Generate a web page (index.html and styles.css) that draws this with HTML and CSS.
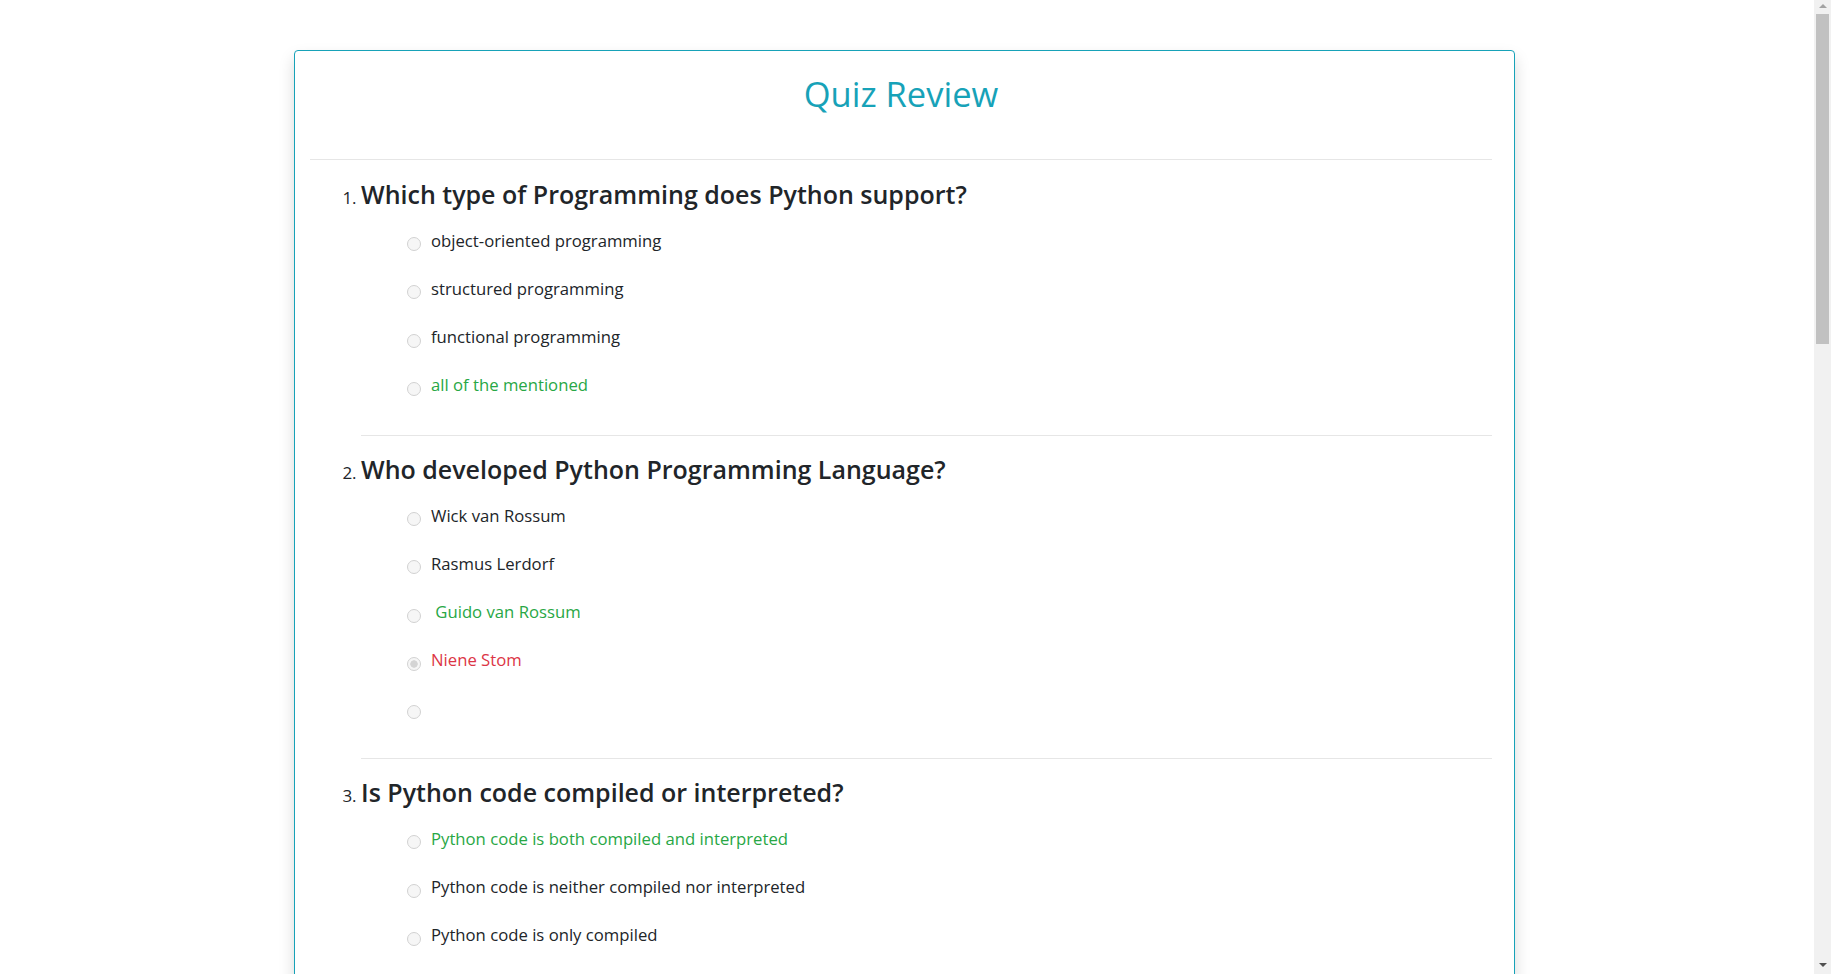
FILE: index.html
```html
<!DOCTYPE html>
<html lang="en">
<head>
<meta charset="utf-8">
<title>Quiz Review</title>
<link rel="stylesheet" href="styles.css">
</head>
<body>
<div class="card">
  <h2 class="title">Quiz Review</h2>
  <div class="card-body">
    <div class="rule"></div>
    <ol class="questions">
      <li class="question">
        <h3 class="q-text">Which type of Programming does Python support?</h3>
        <div class="options">
          <label class="option"><input type="radio" disabled><span class="opt-text">object-oriented programming</span></label>
          <label class="option"><input type="radio" disabled><span class="opt-text">structured programming</span></label>
          <label class="option"><input type="radio" disabled><span class="opt-text">functional programming</span></label>
          <label class="option"><input type="radio" disabled><span class="opt-text correct">all of the mentioned</span></label>
        </div>
        <div class="rule"></div>
      </li>
      <li class="question">
        <h3 class="q-text">Who developed Python Programming Language?</h3>
        <div class="options">
          <label class="option"><input type="radio" disabled><span class="opt-text">Wick van Rossum</span></label>
          <label class="option"><input type="radio" disabled><span class="opt-text">Rasmus Lerdorf</span></label>
          <label class="option"><input type="radio" disabled><span class="opt-text correct">&nbsp;Guido van Rossum</span></label>
          <label class="option"><input type="radio" disabled checked><span class="opt-text wrong">Niene Stom</span></label>
          <label class="option"><input type="radio" disabled><span class="opt-text"></span></label>
        </div>
        <div class="rule"></div>
      </li>
      <li class="question">
        <h3 class="q-text">Is Python code compiled or interpreted?</h3>
        <div class="options">
          <label class="option"><input type="radio" disabled><span class="opt-text correct">Python code is both compiled and interpreted</span></label>
          <label class="option"><input type="radio" disabled><span class="opt-text">Python code is neither compiled nor interpreted</span></label>
          <label class="option"><input type="radio" disabled><span class="opt-text">Python code is only compiled</span></label>
          <label class="option"><input type="radio" disabled><span class="opt-text">Python code is only interpreted</span></label>
        </div>
        <div class="rule"></div>
      </li>
      <li class="question">
        <h3 class="q-text">Is Python case sensitive when dealing with identifiers?</h3>
        <div class="options">
          <label class="option"><input type="radio" disabled><span class="opt-text">no</span></label>
          <label class="option"><input type="radio" disabled><span class="opt-text correct">yes</span></label>
          <label class="option"><input type="radio" disabled><span class="opt-text">machine dependent</span></label>
          <label class="option"><input type="radio" disabled><span class="opt-text">none of the mentioned</span></label>
        </div>
        <div class="rule"></div>
      </li>
      <li class="question">
        <h3 class="q-text">Which of the following is the correct extension of the Python file?</h3>
        <div class="options">
          <label class="option"><input type="radio" disabled><span class="opt-text">.python</span></label>
          <label class="option"><input type="radio" disabled><span class="opt-text">.pl</span></label>
          <label class="option"><input type="radio" disabled><span class="opt-text correct">.py</span></label>
          <label class="option"><input type="radio" disabled><span class="opt-text">.p</span></label>
        </div>
        <div class="rule"></div>
      </li>
      <li class="question">
        <h3 class="q-text">Which keyword is used for function in Python language?</h3>
        <div class="options">
          <label class="option"><input type="radio" disabled><span class="opt-text">Function</span></label>
          <label class="option"><input type="radio" disabled><span class="opt-text correct">def</span></label>
          <label class="option"><input type="radio" disabled><span class="opt-text">Fun</span></label>
          <label class="option"><input type="radio" disabled><span class="opt-text">Define</span></label>
        </div>
        <div class="rule"></div>
      </li>
      <li class="question">
        <h3 class="q-text">Which character is used to give single-line comments in Python?</h3>
        <div class="options">
          <label class="option"><input type="radio" disabled><span class="opt-text">//</span></label>
          <label class="option"><input type="radio" disabled><span class="opt-text correct">#</span></label>
          <label class="option"><input type="radio" disabled><span class="opt-text">!</span></label>
          <label class="option"><input type="radio" disabled><span class="opt-text">/*</span></label>
        </div>
        <div class="rule"></div>
      </li>
      <li class="question">
        <h3 class="q-text">What is the maximum possible length of an identifier in Python?</h3>
        <div class="options">
          <label class="option"><input type="radio" disabled><span class="opt-text">79 characters</span></label>
          <label class="option"><input type="radio" disabled><span class="opt-text">31 characters</span></label>
          <label class="option"><input type="radio" disabled><span class="opt-text">63 characters</span></label>
          <label class="option"><input type="radio" disabled><span class="opt-text correct">none of the mentioned</span></label>
        </div>
        <div class="rule"></div>
      </li>
      <li class="question">
        <h3 class="q-text">Which of the following functions is a built-in function in Python?</h3>
        <div class="options">
          <label class="option"><input type="radio" disabled><span class="opt-text">factorial()</span></label>
          <label class="option"><input type="radio" disabled><span class="opt-text correct">print()</span></label>
          <label class="option"><input type="radio" disabled><span class="opt-text">seed()</span></label>
          <label class="option"><input type="radio" disabled><span class="opt-text">sqrt()</span></label>
        </div>
      </li>
    </ol>
  </div>
</div>
<div class="scrollbar" aria-hidden="true">
  <div class="sb-btn sb-up"><span class="sb-arrow-up"></span></div>
  <div class="sb-thumb"></div>
  <div class="sb-track"></div>
  <div class="sb-btn sb-down"><span class="sb-arrow-down"></span></div>
</div>
</body>
</html>
```

FILE: styles.css
```css
html, body {
  margin: 0;
  padding: 0;
  background: #ffffff;
}

body {
  font-family: "Open Sans", "Noto Sans", "Liberation Sans", sans-serif;
  color: #212529;
}

.card {
  box-sizing: border-box;
  width: 1221px;
  margin: 50px 0 60px 294px;
  border: 1px solid #17a2b8;
  border-radius: 4px;
  box-shadow: 0 0.5rem 1rem rgba(0, 0, 0, 0.15);
  background: #fff;
  padding: 23px 22px 60px 15px;
}

.title {
  margin: 0;
  font-size: 34.5px;
  line-height: 40px;
  font-weight: 500;
  color: #17a2b8;
  text-align: center;
}

.card-body {
  padding-top: 45px;
}

.rule {
  height: 1px;
  background: #e6e6e6;
}

.questions {
  margin: 0;
  padding: 0 0 0 51px;
  font-size: 17px;
}

.question .rule {
  margin-top: 22px;
}

.q-text {
  margin: 17px 0 0;
  font-size: 25px;
  line-height: 32px;
  font-weight: 600;
  color: #212529;
}

.questions > .question:first-child .q-text {
  margin-top: 18px;
}

.options {
  margin-top: 10px;
  padding-left: 46px;
}

.option {
  display: flex;
  align-items: center;
  height: 48.25px;
}

.option input {
  -webkit-appearance: none;
  appearance: none;
  box-sizing: border-box;
  margin: 0;
  width: 14px;
  height: 14px;
  flex: none;
  border: 1px solid #d2d2d2;
  border-radius: 50%;
  background: #f6f6f6;
}

.option input:checked {
  background: radial-gradient(circle, #d4d4d4 0 3.4px, #f6f6f6 4px);
}

.opt-text {
  margin-left: 10px;
  font-size: 16.7px;
  line-height: 24px;
  padding-bottom: 7px;
  color: #212529;
}

.opt-text.correct {
  color: #28a745;
}

.opt-text.wrong {
  color: #dc3545;
}

/* window scrollbar replica */
.scrollbar {
  position: fixed;
  top: 0;
  right: 0;
  width: 17px;
  height: 100vh;
  background: #f1f1f1;
  display: flex;
  flex-direction: column;
}

.sb-btn {
  height: 14px;
  flex: none;
  display: flex;
  justify-content: center;
}

.sb-up {
  align-items: flex-start;
  padding-top: 4px;
  box-sizing: border-box;
}

.sb-down {
  align-items: flex-end;
  padding-bottom: 7px;
  box-sizing: border-box;
  height: 17px;
}

.sb-arrow-up {
  width: 0;
  height: 0;
  border-left: 4px solid transparent;
  border-right: 4px solid transparent;
  border-bottom: 4px solid #a3a3a3;
}

.sb-arrow-down {
  width: 0;
  height: 0;
  border-left: 4px solid transparent;
  border-right: 4px solid transparent;
  border-top: 4px solid #505050;
}

.sb-thumb {
  flex: none;
  height: 330px;
  margin: 0 2px;
  background: #c1c1c1;
}

.sb-track {
  flex: 1;
}
```
